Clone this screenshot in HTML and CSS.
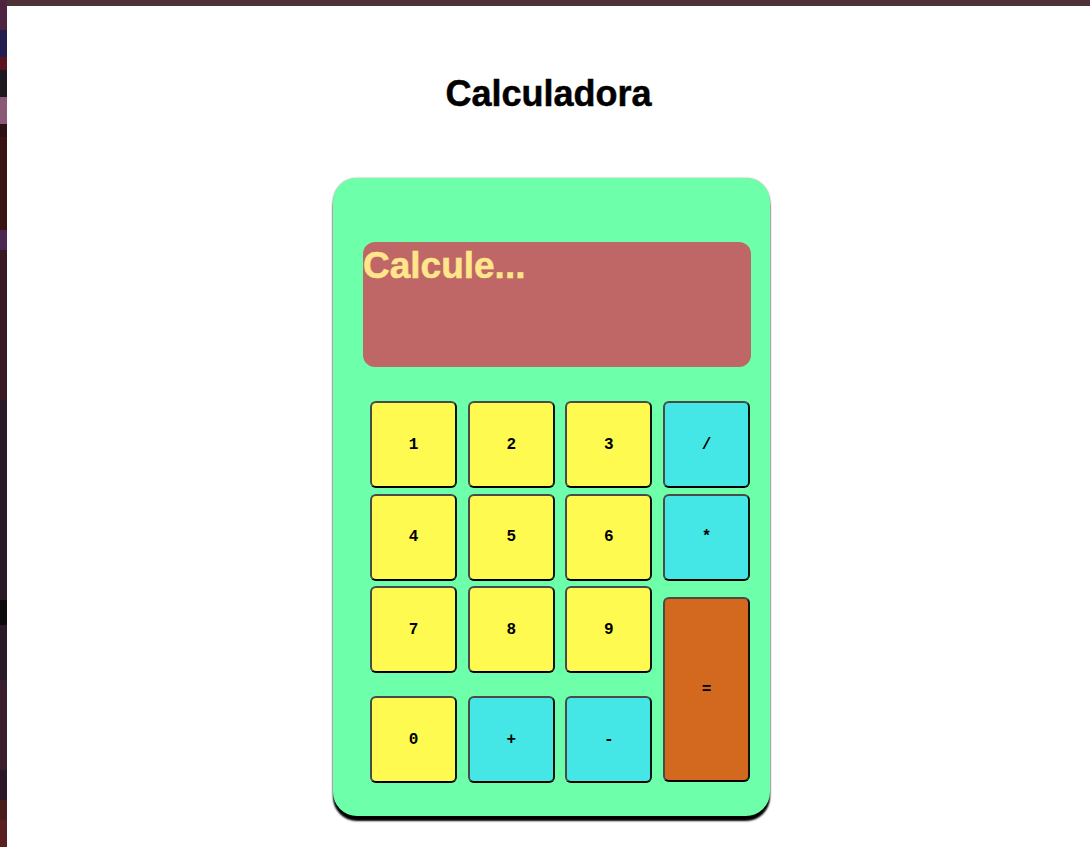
FILE: index.html
```html
<!DOCTYPE html>
<html lang="pt">
<head>
<meta charset="utf-8">
<title>Calculadora</title>
<link rel="stylesheet" href="styles.css">
</head>
<body>
<main class="page">
  <h1 class="title">Calculadora</h1>
  <div class="calc">
    <div class="display">Calcule...</div>
    <div class="keys">
      <button class="key num">1</button>
      <button class="key num">2</button>
      <button class="key num">3</button>
      <button class="key op">/</button>
      <button class="key num">4</button>
      <button class="key num">5</button>
      <button class="key num">6</button>
      <button class="key op">*</button>
      <button class="key num">7</button>
      <button class="key num">8</button>
      <button class="key num">9</button>
      <button class="key eq">=</button>
      <button class="key num last">0</button>
      <button class="key op last">+</button>
      <button class="key op last">-</button>
    </div>
  </div>
</main>
</body>
</html>
```

FILE: styles.css
```css
html {
  background:
    linear-gradient(#4f3236, #4f3236) 7px 0 / 100% 6px no-repeat,
    linear-gradient(to bottom,
      #4d2540 0, #4d2540 30px,
      #241d50 30px, #241d50 57px,
      #5a1520 57px, #5a1520 70px,
      #1f1820 70px, #1f1820 97px,
      #8b5878 97px, #8b5878 124px,
      #2c1014 124px, #2c1014 137px,
      #3a1414 137px, #3a1414 230px,
      #4a2a50 230px, #4a2a50 250px,
      #3a1a22 250px, #3a1a22 400px,
      #2a1a28 400px, #2a1a28 600px,
      #0c0a0c 600px, #0c0a0c 625px,
      #2a1a28 625px, #2a1a28 680px,
      #3a1e2e 680px, #3a1e2e 770px,
      #2a1828 770px, #2a1828 800px,
      #4a1e18 800px, #4a1e18 820px,
      #5a2020 820px);
}

body {
  margin: 0;
  padding: 6px 0 0 7px;
  font-family: "Liberation Sans", Arial, sans-serif;
}

.page {
  background: #ffffff;
  min-height: 841px;
  padding-top: 67px;
  box-sizing: border-box;
  display: flex;
  flex-direction: column;
  align-items: center;
}

.title {
  margin: 0;
  font-size: 36px;
  font-weight: bold;
  line-height: 42px;
  color: #000;
  -webkit-text-stroke: 0.5px #000;
}

.calc {
  margin: 63px 0 0 6px;
  width: 437px;
  height: 638px;
  box-sizing: border-box;
  padding: 64px 19px 0 30px;
  background: #6effaa;
  border-radius: 24px;
  box-shadow: 0 5px 2px #000, 0 0 2px #999;
}

.display {
  height: 125px;
  background: #bf6666;
  border-radius: 12px;
  color: #ffe68a;
  font-size: 37px;
  font-weight: bold;
  line-height: 48px;
  -webkit-text-stroke: 0.5px #ffe68a;
}

.keys {
  margin: 34px 0 0 7px;
  display: grid;
  grid-template-columns: repeat(4, 87px);
  grid-template-rows: 87px 87px 87px 104.5px;
  column-gap: 10.7px;
  row-gap: 5.5px;
}

.key {
  width: 87px;
  height: 87px;
  box-sizing: border-box;
  border: 2px solid #4a4a4a;
  border-right-color: #111;
  border-bottom-color: #000;
  border-radius: 6px;
  font-family: "Liberation Mono", "Courier New", monospace;
  font-weight: bold;
  font-size: 16px;
  color: #000;
  padding: 0;
}

.num { background: #fffa50; }
.op { background: #45e6e6; }

.eq {
  background: #d2691e;
  grid-column: 4;
  grid-row: 3 / 5;
  height: auto;
  margin: 11px 0 1px;
}

.last {
  align-self: end;
}
```
